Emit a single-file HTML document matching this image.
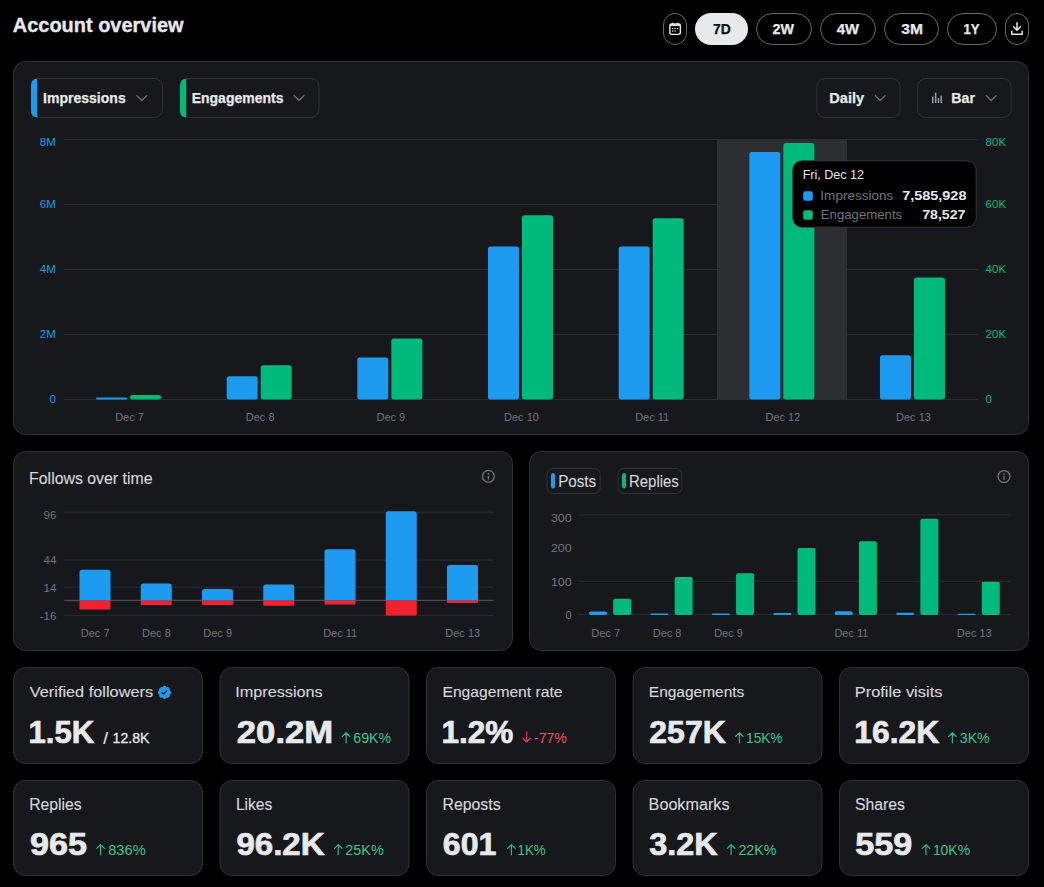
<!DOCTYPE html>
<html><head><meta charset="utf-8"><title>Account overview</title>
<style>
html,body{margin:0;padding:0;background:#000;width:1044px;height:887px;overflow:hidden;}
svg{display:block;font-family:"Liberation Sans", sans-serif;}
</style></head>
<body>
<svg width="1044" height="887" viewBox="0 0 1044 887">
<rect width="1044" height="887" fill="#000"/>
<text x="12.83" y="31.5" font-size="19.513" font-weight="700" fill="#e7e9ea" stroke="#e7e9ea" stroke-width="0.35" textLength="170.76" lengthAdjust="spacingAndGlyphs">Account overview</text>
<rect x="663.5" y="13.5" width="23" height="31" rx="11.5" fill="#000" stroke="#66696d" stroke-width="1"/>
<rect x="695" y="13" width="53" height="32" rx="16" fill="#e7e9ea"/>
<text x="712.97" y="34.1" font-size="13.917" font-weight="700" fill="#0f1419" stroke="#0f1419" stroke-width="0.25" textLength="17.75" lengthAdjust="spacingAndGlyphs">7D</text>
<rect x="756.5" y="13.5" width="55" height="31" rx="16" fill="#000" stroke="#66696d" stroke-width="1"/>
<text x="772.57" y="34.1" font-size="13.917" font-weight="700" fill="#e7e9ea" stroke="#e7e9ea" stroke-width="0.25" textLength="21.4" lengthAdjust="spacingAndGlyphs">2W</text>
<rect x="820.5" y="13.5" width="55" height="31" rx="16" fill="#000" stroke="#66696d" stroke-width="1"/>
<text x="836.81" y="34.1" font-size="13.917" font-weight="700" fill="#e7e9ea" stroke="#e7e9ea" stroke-width="0.25" textLength="22.26" lengthAdjust="spacingAndGlyphs">4W</text>
<rect x="884.5" y="13.5" width="54" height="31" rx="16" fill="#000" stroke="#66696d" stroke-width="1"/>
<text x="901.26" y="34.1" font-size="13.917" font-weight="700" fill="#e7e9ea" stroke="#e7e9ea" stroke-width="0.25" textLength="21.67" lengthAdjust="spacingAndGlyphs">3M</text>
<rect x="947.5" y="13.5" width="49" height="31" rx="16" fill="#000" stroke="#66696d" stroke-width="1"/>
<text x="963.52" y="34.1" font-size="13.917" font-weight="700" fill="#e7e9ea" stroke="#e7e9ea" stroke-width="0.25" textLength="16.1" lengthAdjust="spacingAndGlyphs">1Y</text>
<rect x="1005.5" y="13.5" width="23" height="31" rx="11.5" fill="#000" stroke="#66696d" stroke-width="1"/>
<g fill="none" stroke="#e7e9ea" stroke-width="1.4"><rect x="669.85" y="24.0" width="10.5" height="10.4" rx="1.8"/><path d="M672.6 22.8v2.4M677.6 22.8v2.4"/></g>
<g fill="#e7e9ea"><rect x="670" y="24.4" width="10.2" height="1.6"/><circle cx="672.6" cy="28.5" r="0.8"/><circle cx="675.1" cy="28.5" r="0.8"/><circle cx="677.6" cy="28.5" r="0.8"/><circle cx="672.6" cy="31" r="0.8"/><circle cx="675.1" cy="31" r="0.8"/></g>
<g fill="none" stroke="#e7e9ea" stroke-width="1.5" stroke-linecap="round" stroke-linejoin="round"><path d="M1017 22.8v7.2M1013.6 26.8l3.4 3.4 3.4-3.4M1011.8 31.2v3h10.4v-3"/></g>
<rect x="13.5" y="61.5" width="1015" height="373" rx="12" fill="#16181c" stroke="#2f3336" stroke-width="1"/>
<rect x="31.5" y="78.5" width="131" height="39" rx="8" fill="#16181c" stroke="#2f3336" stroke-width="1"/>
<path d="M37.2 78.6 V117.4 H38 Q31 117.4 31 110.4 V85.6 Q31 78.6 38 78.6 Z" fill="#1d9bf0"/>
<text x="43.0" y="103" font-size="14.499" font-weight="700" fill="#e7e9ea" stroke="#e7e9ea" stroke-width="0.25" textLength="82.7" lengthAdjust="spacingAndGlyphs">Impressions</text>
<path d="M136.9 95.6 l4.95 4.95 4.95 -4.95" fill="none" stroke="#71767b" stroke-width="1.3" stroke-linecap="round" stroke-linejoin="round"/>
<rect x="180.5" y="78.5" width="138.5" height="39" rx="8" fill="#16181c" stroke="#2f3336" stroke-width="1"/>
<path d="M186.2 78.6 V117.4 H187 Q180 117.4 180 110.4 V85.6 Q180 78.6 187 78.6 Z" fill="#00ba7c"/>
<text x="191.7" y="102.8" font-size="14.208" font-weight="700" fill="#e7e9ea" stroke="#e7e9ea" stroke-width="0.25" textLength="91.72" lengthAdjust="spacingAndGlyphs">Engagements</text>
<path d="M294.1 95.6 l4.95 4.95 4.95 -4.95" fill="none" stroke="#71767b" stroke-width="1.3" stroke-linecap="round" stroke-linejoin="round"/>
<rect x="816.9" y="78.5" width="83.10000000000002" height="39" rx="8" fill="#16181c" stroke="#2f3336" stroke-width="1"/>
<text x="829.29" y="102.7" font-size="13.917" font-weight="700" fill="#e7e9ea" stroke="#e7e9ea" stroke-width="0.25" textLength="34.88" lengthAdjust="spacingAndGlyphs">Daily</text>
<path d="M875.3 95.6 l4.95 4.95 4.95 -4.95" fill="none" stroke="#71767b" stroke-width="1.3" stroke-linecap="round" stroke-linejoin="round"/>
<rect x="917.7" y="78.5" width="93.39999999999998" height="39" rx="8" fill="#16181c" stroke="#2f3336" stroke-width="1"/>
<text x="951.32" y="103" font-size="14.208" font-weight="700" fill="#e7e9ea" stroke="#e7e9ea" stroke-width="0.25" textLength="23.67" lengthAdjust="spacingAndGlyphs">Bar</text>
<path d="M986.3 95.6 l4.95 4.95 4.95 -4.95" fill="none" stroke="#71767b" stroke-width="1.3" stroke-linecap="round" stroke-linejoin="round"/>
<rect x="932" y="96.6" width="1.5" height="6.400000000000006" fill="#9a9ea2"/>
<rect x="934.9" y="92.7" width="1.5" height="10.299999999999997" fill="#9a9ea2"/>
<rect x="937.7" y="98.0" width="1.5" height="5.0" fill="#9a9ea2"/>
<rect x="940.5" y="95.6" width="1.5" height="7.400000000000006" fill="#9a9ea2"/>
<rect x="63.5" y="139.0" width="914" height="1" fill="#2a2d31"/>
<rect x="63.5" y="204.0" width="914" height="1" fill="#2a2d31"/>
<rect x="63.5" y="269.0" width="914" height="1" fill="#2a2d31"/>
<rect x="63.5" y="334.0" width="914" height="1" fill="#2a2d31"/>
<rect x="63.5" y="399.0" width="914" height="1" fill="#2a2d31"/>
<rect x="717" y="139.5" width="130" height="259.5" fill="#2c2e32"/>
<rect x="96.0" y="397.4" width="31" height="2.2" rx="1.1000000000000227" fill="#1d9bf0"/>
<rect x="130.0" y="395.1" width="31" height="4.5" rx="2.25" fill="#00ba7c"/>
<rect x="226.67" y="376.2" width="31" height="23.4" rx="2.5" fill="#1d9bf0"/>
<rect x="260.67" y="365.2" width="31" height="34.4" rx="2.5" fill="#00ba7c"/>
<rect x="357.33" y="357.6" width="31" height="42.0" rx="2.5" fill="#1d9bf0"/>
<rect x="391.33" y="338.4" width="31" height="61.2" rx="2.5" fill="#00ba7c"/>
<rect x="488.0" y="246.5" width="31" height="153.1" rx="2.5" fill="#1d9bf0"/>
<rect x="522.0" y="215.3" width="31" height="184.3" rx="2.5" fill="#00ba7c"/>
<rect x="618.67" y="246.5" width="31" height="153.1" rx="2.5" fill="#1d9bf0"/>
<rect x="652.67" y="218.2" width="31" height="181.4" rx="2.5" fill="#00ba7c"/>
<rect x="749.34" y="151.9" width="31" height="247.7" rx="2.5" fill="#1d9bf0"/>
<rect x="783.34" y="143.0" width="31" height="256.6" rx="2.5" fill="#00ba7c"/>
<rect x="880.0" y="355.3" width="31" height="44.3" rx="2.5" fill="#1d9bf0"/>
<rect x="914.0" y="277.4" width="31" height="122.2" rx="2.5" fill="#00ba7c"/>
<text x="55.8" y="146" font-size="11.5" fill="#1d9bf0" text-anchor="end">8M</text>
<text x="55.8" y="208.2" font-size="11.5" fill="#1d9bf0" text-anchor="end">6M</text>
<text x="55.8" y="273.2" font-size="11.5" fill="#1d9bf0" text-anchor="end">4M</text>
<text x="55.8" y="338.2" font-size="11.5" fill="#1d9bf0" text-anchor="end">2M</text>
<text x="55.8" y="403.2" font-size="11.5" fill="#1d9bf0" text-anchor="end">0</text>
<text x="985.6" y="146" font-size="11.5" fill="#00ba7c">80K</text>
<text x="985.6" y="208.2" font-size="11.5" fill="#00ba7c">60K</text>
<text x="985.6" y="273.2" font-size="11.5" fill="#00ba7c">40K</text>
<text x="985.6" y="338.2" font-size="11.5" fill="#00ba7c">20K</text>
<text x="985.6" y="403.2" font-size="11.5" fill="#00ba7c">0</text>
<text x="129.5" y="421" font-size="11" fill="#71767b" text-anchor="middle">Dec 7</text>
<text x="260.17" y="421" font-size="11" fill="#71767b" text-anchor="middle">Dec 8</text>
<text x="390.83" y="421" font-size="11" fill="#71767b" text-anchor="middle">Dec 9</text>
<text x="521.5" y="421" font-size="11" fill="#71767b" text-anchor="middle">Dec 10</text>
<text x="652.17" y="421" font-size="11" fill="#71767b" text-anchor="middle">Dec 11</text>
<text x="782.84" y="421" font-size="11" fill="#71767b" text-anchor="middle">Dec 12</text>
<text x="913.5" y="421" font-size="11" fill="#71767b" text-anchor="middle">Dec 13</text>
<rect x="792.8" y="160.8" width="183.4" height="66.4" rx="9" fill="#000" stroke="#35383c" stroke-width="1"/>
<text x="802.65" y="179.2" font-size="13.227" fill="#e7e9ea" textLength="61.44" lengthAdjust="spacingAndGlyphs">Fri, Dec 12</text>
<rect x="803.2" y="191.2" width="9.6" height="9.5" rx="2" fill="#1d9bf0"/>
<rect x="803.2" y="210.3" width="9.6" height="9.5" rx="2" fill="#00ba7c"/>
<text x="820.37" y="199.9" font-size="13.227" fill="#71767b" textLength="72.94" lengthAdjust="spacingAndGlyphs">Impressions</text>
<text x="820.84" y="219" font-size="13.518" fill="#71767b" textLength="81.33" lengthAdjust="spacingAndGlyphs">Engagements</text>
<text x="902.17" y="199.9" font-size="13.227" font-weight="700" fill="#e7e9ea" textLength="64.29" lengthAdjust="spacingAndGlyphs">7,585,928</text>
<text x="922.21" y="219" font-size="13.518" font-weight="700" fill="#e7e9ea" textLength="43.21" lengthAdjust="spacingAndGlyphs">78,527</text>
<rect x="13.5" y="451.5" width="499" height="199" rx="12" fill="#16181c" stroke="#2f3336" stroke-width="1"/>
<text x="29.11" y="484" font-size="15.88" fill="#d5d7d9" stroke="#d5d7d9" stroke-width="0.15" textLength="123.39" lengthAdjust="spacingAndGlyphs">Follows over time</text>
<g fill="none" stroke="#71767b" stroke-width="1.3"><circle cx="488.4" cy="476.3" r="5.9"/></g>
<g fill="#71767b"><circle cx="488.4" cy="473.90000000000003" r="0.85"/><rect x="487.75" y="475.7" width="1.3" height="3.9" rx="0.6"/></g>
<rect x="64.3" y="511.70000000000005" width="429" height="1" fill="#2a2d31"/>
<rect x="64.3" y="559.6" width="429" height="1" fill="#2a2d31"/>
<rect x="64.3" y="586.7" width="429" height="1" fill="#2a2d31"/>
<rect x="64.3" y="614.9" width="429" height="1" fill="#2a2d31"/>
<rect x="64.3" y="599.8" width="429" height="1.2" fill="#4a4e52"/>
<path d="M79.5 600.4 V572.2 Q79.5 569.7 82.0 569.7 H108.0 Q110.5 569.7 110.5 572.2 V600.4 Z" fill="#1d9bf0"/>
<path d="M79.5 600.4 V608.3 Q79.5 609.5 80.7 609.5 H109.3 Q110.5 609.5 110.5 608.3 V600.4 Z" fill="#f4212e"/>
<path d="M140.75 600.4 V586.1 Q140.75 583.6 143.25 583.6 H169.25 Q171.75 583.6 171.75 586.1 V600.4 Z" fill="#1d9bf0"/>
<path d="M140.75 600.4 V603.8 Q140.75 605.0 141.95 605.0 H170.55 Q171.75 605.0 171.75 603.8 V600.4 Z" fill="#f4212e"/>
<path d="M202.0 600.4 V591.6 Q202.0 589.1 204.5 589.1 H230.5 Q233.0 589.1 233.0 591.6 V600.4 Z" fill="#1d9bf0"/>
<path d="M202.0 600.4 V603.8 Q202.0 605.0 203.2 605.0 H231.8 Q233.0 605.0 233.0 603.8 V600.4 Z" fill="#f4212e"/>
<path d="M263.25 600.4 V587.1 Q263.25 584.6 265.75 584.6 H291.75 Q294.25 584.6 294.25 587.1 V600.4 Z" fill="#1d9bf0"/>
<path d="M263.25 600.4 V604.5999999999999 Q263.25 605.8 264.45 605.8 H293.05 Q294.25 605.8 294.25 604.5999999999999 V600.4 Z" fill="#f4212e"/>
<path d="M324.5 600.4 V551.7 Q324.5 549.2 327.0 549.2 H353.0 Q355.5 549.2 355.5 551.7 V600.4 Z" fill="#1d9bf0"/>
<path d="M324.5 600.4 V603.4 Q324.5 604.6 325.7 604.6 H354.3 Q355.5 604.6 355.5 603.4 V600.4 Z" fill="#f4212e"/>
<path d="M385.75 600.4 V513.8 Q385.75 511.3 388.25 511.3 H414.25 Q416.75 511.3 416.75 513.8 V600.4 Z" fill="#1d9bf0"/>
<path d="M385.75 600.4 V614.4 Q385.75 615.6 386.95 615.6 H415.55 Q416.75 615.6 416.75 614.4 V600.4 Z" fill="#f4212e"/>
<path d="M447.0 600.4 V567.5 Q447.0 565.0 449.5 565.0 H475.5 Q478.0 565.0 478.0 567.5 V600.4 Z" fill="#1d9bf0"/>
<path d="M447.0 600.4 V601.6999999999999 Q447.0 602.9 448.2 602.9 H476.8 Q478.0 602.9 478.0 601.6999999999999 V600.4 Z" fill="#f4212e"/>
<text x="56.4" y="519.4" font-size="11.5" fill="#71767b" text-anchor="end">96</text>
<text x="56.4" y="564.4" font-size="11.5" fill="#71767b" text-anchor="end">44</text>
<text x="56.4" y="592" font-size="11.5" fill="#71767b" text-anchor="end">14</text>
<text x="56.4" y="620" font-size="11.5" fill="#71767b" text-anchor="end">-16</text>
<text x="95.2" y="637" font-size="11" fill="#71767b" text-anchor="middle">Dec 7</text>
<text x="156.45" y="637" font-size="11" fill="#71767b" text-anchor="middle">Dec 8</text>
<text x="217.7" y="637" font-size="11" fill="#71767b" text-anchor="middle">Dec 9</text>
<text x="340.2" y="637" font-size="11" fill="#71767b" text-anchor="middle">Dec 11</text>
<text x="462.7" y="637" font-size="11" fill="#71767b" text-anchor="middle">Dec 13</text>
<rect x="529.5" y="451.5" width="499" height="199" rx="12" fill="#16181c" stroke="#2f3336" stroke-width="1"/>
<rect x="546.9" y="468.5" width="53.30000000000007" height="25" rx="6" fill="#16181c" stroke="#2f3336" stroke-width="1"/>
<rect x="551.0" y="473" width="4" height="15.6" rx="2" fill="#1d9bf0"/>
<text x="558.13" y="486.6" font-size="16.207" fill="#d5d7d9" stroke="#d5d7d9" stroke-width="0.1" textLength="38.09" lengthAdjust="spacingAndGlyphs">Posts</text>
<rect x="617.9" y="468.5" width="64.0" height="25" rx="6" fill="#16181c" stroke="#2f3336" stroke-width="1"/>
<rect x="622.0" y="473" width="4" height="15.6" rx="2" fill="#00ba7c"/>
<text x="628.99" y="486.6" font-size="16.207" fill="#d5d7d9" stroke="#d5d7d9" stroke-width="0.1" textLength="49.87" lengthAdjust="spacingAndGlyphs">Replies</text>
<g fill="none" stroke="#71767b" stroke-width="1.3"><circle cx="1004" cy="476.5" r="5.9"/></g>
<g fill="#71767b"><circle cx="1004" cy="474.1" r="0.85"/><rect x="1003.35" y="475.9" width="1.3" height="3.9" rx="0.6"/></g>
<rect x="579" y="514.3" width="431.7" height="1" fill="#2a2d31"/>
<rect x="579" y="580.8" width="431.7" height="1" fill="#2a2d31"/>
<rect x="579" y="613.9" width="431.7" height="1" fill="#2a2d31"/>
<rect x="589.0" y="611.5" width="18" height="3.5" rx="1.75" fill="#1d9bf0"/>
<rect x="613.2" y="598.7" width="18" height="16.3" rx="2" fill="#00ba7c"/>
<rect x="650.43" y="613.6" width="18" height="1.4" rx="0.6999999999999886" fill="#1d9bf0"/>
<rect x="674.63" y="577.0" width="18" height="38.0" rx="2" fill="#00ba7c"/>
<rect x="711.86" y="613.6" width="18" height="1.4" rx="0.6999999999999886" fill="#1d9bf0"/>
<rect x="736.06" y="573.3" width="18" height="41.7" rx="2" fill="#00ba7c"/>
<rect x="773.29" y="613.0" width="18" height="2.0" rx="1.0" fill="#1d9bf0"/>
<rect x="797.49" y="548.0" width="18" height="67.0" rx="2" fill="#00ba7c"/>
<rect x="834.72" y="611.3" width="18" height="3.7" rx="1.8500000000000227" fill="#1d9bf0"/>
<rect x="858.92" y="541.3" width="18" height="73.7" rx="2" fill="#00ba7c"/>
<rect x="896.15" y="612.7" width="18" height="2.3" rx="1.1499999999999773" fill="#1d9bf0"/>
<rect x="920.35" y="518.8" width="18" height="96.2" rx="2" fill="#00ba7c"/>
<rect x="957.58" y="613.7" width="18" height="1.3" rx="0.6499999999999773" fill="#1d9bf0"/>
<rect x="981.78" y="581.8" width="18" height="33.2" rx="2" fill="#00ba7c"/>
<text x="571.7" y="521.8" font-size="11" fill="#71767b" text-anchor="end" textLength="20.8" lengthAdjust="spacingAndGlyphs">300</text>
<text x="571.7" y="552.1" font-size="11" fill="#71767b" text-anchor="end" textLength="20.8" lengthAdjust="spacingAndGlyphs">200</text>
<text x="571.7" y="585.9" font-size="11" fill="#71767b" text-anchor="end" textLength="20.8" lengthAdjust="spacingAndGlyphs">100</text>
<text x="571.7" y="618.6" font-size="11" fill="#71767b" text-anchor="end">0</text>
<text x="605.7" y="636.7" font-size="11" fill="#71767b" text-anchor="middle">Dec 7</text>
<text x="667.13" y="636.7" font-size="11" fill="#71767b" text-anchor="middle">Dec 8</text>
<text x="728.56" y="636.7" font-size="11" fill="#71767b" text-anchor="middle">Dec 9</text>
<text x="851.42" y="636.7" font-size="11" fill="#71767b" text-anchor="middle">Dec 11</text>
<text x="974.28" y="636.7" font-size="11" fill="#71767b" text-anchor="middle">Dec 13</text>
<rect x="13.5" y="667.5" width="189.0" height="96" rx="12" fill="#16181c" stroke="#2f3336" stroke-width="1"/>
<text x="29.8" y="696.6" font-size="15.298" fill="#d5d7d9" stroke="#d5d7d9" stroke-width="0.15" textLength="123.28" lengthAdjust="spacingAndGlyphs">Verified followers</text>
<text x="28.5" y="742.6" font-size="30.596" font-weight="700" fill="#e7e9ea" stroke="#e7e9ea" stroke-width="0.7" textLength="65.66" lengthAdjust="spacingAndGlyphs">1.5K</text>
<rect x="220.0" y="667.5" width="189.0" height="96" rx="12" fill="#16181c" stroke="#2f3336" stroke-width="1"/>
<text x="235.18" y="696.6" font-size="15.298" fill="#d5d7d9" stroke="#d5d7d9" stroke-width="0.15" textLength="87.52" lengthAdjust="spacingAndGlyphs">Impressions</text>
<text x="236.79" y="742.6" font-size="30.596" font-weight="700" fill="#e7e9ea" stroke="#e7e9ea" stroke-width="0.7" textLength="96.47" lengthAdjust="spacingAndGlyphs">20.2M</text>
<path d="M346.09999999999997 742.8000000000001 V732.6999999999999 M342.3 736.5 L346.09999999999997 732.6999999999999 L349.9 736.5" fill="none" stroke="#2fbd85" stroke-width="1.15" stroke-linecap="round" stroke-linejoin="round"/>
<text x="353.28" y="742.6" font-size="13.954" fill="#3fc48d" textLength="37.84" lengthAdjust="spacingAndGlyphs">69K%</text>
<rect x="426.5" y="667.5" width="189.0" height="96" rx="12" fill="#16181c" stroke="#2f3336" stroke-width="1"/>
<text x="442.49" y="696.6" font-size="15.298" fill="#d5d7d9" stroke="#d5d7d9" stroke-width="0.15" textLength="119.97" lengthAdjust="spacingAndGlyphs">Engagement rate</text>
<text x="441.54" y="742.6" font-size="30.596" font-weight="700" fill="#e7e9ea" stroke="#e7e9ea" stroke-width="0.7" textLength="71.88" lengthAdjust="spacingAndGlyphs">1.2%</text>
<path d="M526.6999999999999 731.9 V742.0000000000001 M522.9 738.2 L526.6999999999999 742.0000000000001 L530.5 738.2" fill="none" stroke="#f0385a" stroke-width="1.15" stroke-linecap="round" stroke-linejoin="round"/>
<text x="534.04" y="742.6" font-size="13.954" fill="#f0506a" textLength="32.8" lengthAdjust="spacingAndGlyphs">-77%</text>
<rect x="633.0" y="667.5" width="189.0" height="96" rx="12" fill="#16181c" stroke="#2f3336" stroke-width="1"/>
<text x="648.88" y="696.6" font-size="15.298" fill="#d5d7d9" stroke="#d5d7d9" stroke-width="0.15" textLength="95.38" lengthAdjust="spacingAndGlyphs">Engagements</text>
<text x="649.34" y="742.6" font-size="30.596" font-weight="700" fill="#e7e9ea" stroke="#e7e9ea" stroke-width="0.7" textLength="76.46" lengthAdjust="spacingAndGlyphs">257K</text>
<path d="M739.4 742.8000000000001 V732.6999999999999 M735.6 736.5 L739.4 732.6999999999999 L743.2 736.5" fill="none" stroke="#2fbd85" stroke-width="1.15" stroke-linecap="round" stroke-linejoin="round"/>
<text x="746.04" y="742.6" font-size="13.954" fill="#3fc48d" textLength="36.49" lengthAdjust="spacingAndGlyphs">15K%</text>
<rect x="839.5" y="667.5" width="189.0" height="96" rx="12" fill="#16181c" stroke="#2f3336" stroke-width="1"/>
<text x="854.71" y="696.6" font-size="15.298" fill="#d5d7d9" stroke="#d5d7d9" stroke-width="0.15" textLength="87.73" lengthAdjust="spacingAndGlyphs">Profile visits</text>
<text x="854.39" y="742.6" font-size="30.596" font-weight="700" fill="#e7e9ea" stroke="#e7e9ea" stroke-width="0.7" textLength="84.89" lengthAdjust="spacingAndGlyphs">16.2K</text>
<path d="M952.4 742.8000000000001 V732.6999999999999 M948.6 736.5 L952.4 732.6999999999999 L956.2 736.5" fill="none" stroke="#2fbd85" stroke-width="1.15" stroke-linecap="round" stroke-linejoin="round"/>
<text x="959.82" y="742.6" font-size="13.954" fill="#3fc48d" textLength="29.9" lengthAdjust="spacingAndGlyphs">3K%</text>
<rect x="13.5" y="780.5" width="189.0" height="95" rx="12" fill="#16181c" stroke="#2f3336" stroke-width="1"/>
<text x="29.27" y="810" font-size="15.88" fill="#d5d7d9" stroke="#d5d7d9" stroke-width="0.15" textLength="52.39" lengthAdjust="spacingAndGlyphs">Replies</text>
<text x="29.92" y="854.6" font-size="30.596" font-weight="700" fill="#e7e9ea" stroke="#e7e9ea" stroke-width="0.7" textLength="56.98" lengthAdjust="spacingAndGlyphs">965</text>
<path d="M100.60000000000001 854.7 V844.5999999999999 M96.8 848.4 L100.60000000000001 844.5999999999999 L104.4 848.4" fill="none" stroke="#2fbd85" stroke-width="1.15" stroke-linecap="round" stroke-linejoin="round"/>
<text x="108.2" y="854.8" font-size="14.535" fill="#3fc48d" textLength="37.48" lengthAdjust="spacingAndGlyphs">836%</text>
<rect x="220.0" y="780.5" width="189.0" height="95" rx="12" fill="#16181c" stroke="#2f3336" stroke-width="1"/>
<text x="235.96" y="810" font-size="15.88" fill="#d5d7d9" stroke="#d5d7d9" stroke-width="0.15" textLength="36.37" lengthAdjust="spacingAndGlyphs">Likes</text>
<text x="236.4" y="854.6" font-size="30.596" font-weight="700" fill="#e7e9ea" stroke="#e7e9ea" stroke-width="0.7" textLength="88.26" lengthAdjust="spacingAndGlyphs">96.2K</text>
<path d="M338.2 854.7 V844.5999999999999 M334.40000000000003 848.4 L338.2 844.5999999999999 L342.0 848.4" fill="none" stroke="#2fbd85" stroke-width="1.15" stroke-linecap="round" stroke-linejoin="round"/>
<text x="345.37" y="854.8" font-size="14.535" fill="#3fc48d" textLength="38.32" lengthAdjust="spacingAndGlyphs">25K%</text>
<rect x="426.5" y="780.5" width="189.0" height="95" rx="12" fill="#16181c" stroke="#2f3336" stroke-width="1"/>
<text x="442.49" y="810" font-size="15.88" fill="#d5d7d9" stroke="#d5d7d9" stroke-width="0.15" textLength="58.14" lengthAdjust="spacingAndGlyphs">Reposts</text>
<text x="442.82" y="854.6" font-size="30.596" font-weight="700" fill="#e7e9ea" stroke="#e7e9ea" stroke-width="0.7" textLength="53.52" lengthAdjust="spacingAndGlyphs">601</text>
<path d="M511.4 854.7 V844.5999999999999 M507.6 848.4 L511.4 844.5999999999999 L515.2 848.4" fill="none" stroke="#2fbd85" stroke-width="1.15" stroke-linecap="round" stroke-linejoin="round"/>
<text x="517.62" y="854.8" font-size="14.535" fill="#3fc48d" textLength="28.06" lengthAdjust="spacingAndGlyphs">1K%</text>
<rect x="633.0" y="780.5" width="189.0" height="95" rx="12" fill="#16181c" stroke="#2f3336" stroke-width="1"/>
<text x="648.61" y="810" font-size="15.88" fill="#d5d7d9" stroke="#d5d7d9" stroke-width="0.15" textLength="80.86" lengthAdjust="spacingAndGlyphs">Bookmarks</text>
<text x="649.26" y="854.6" font-size="30.596" font-weight="700" fill="#e7e9ea" stroke="#e7e9ea" stroke-width="0.7" textLength="68.42" lengthAdjust="spacingAndGlyphs">3.2K</text>
<path d="M731.1 854.7 V844.5999999999999 M727.3000000000001 848.4 L731.1 844.5999999999999 L734.9000000000001 848.4" fill="none" stroke="#2fbd85" stroke-width="1.15" stroke-linecap="round" stroke-linejoin="round"/>
<text x="738.39" y="854.8" font-size="14.535" fill="#3fc48d" textLength="37.98" lengthAdjust="spacingAndGlyphs">22K%</text>
<rect x="839.5" y="780.5" width="189.0" height="95" rx="12" fill="#16181c" stroke="#2f3336" stroke-width="1"/>
<text x="854.94" y="810" font-size="15.88" fill="#d5d7d9" stroke="#d5d7d9" stroke-width="0.15" textLength="49.86" lengthAdjust="spacingAndGlyphs">Shares</text>
<text x="855.38" y="854.6" font-size="30.596" font-weight="700" fill="#e7e9ea" stroke="#e7e9ea" stroke-width="0.7" textLength="56.99" lengthAdjust="spacingAndGlyphs">559</text>
<path d="M926.0 854.7 V844.5999999999999 M922.2 848.4 L926.0 844.5999999999999 L929.8000000000001 848.4" fill="none" stroke="#2fbd85" stroke-width="1.15" stroke-linecap="round" stroke-linejoin="round"/>
<text x="932.88" y="854.8" font-size="14.535" fill="#3fc48d" textLength="37.18" lengthAdjust="spacingAndGlyphs">10K%</text>
<text x="103.2" y="743.6" font-size="17" fill="#e7e9ea" stroke="#e7e9ea" stroke-width="0.2">/</text>
<text x="112.62" y="742.8" font-size="14.026" fill="#e7e9ea" stroke="#e7e9ea" stroke-width="0.3" textLength="36.86" lengthAdjust="spacingAndGlyphs">12.8K</text>
<g transform="translate(164.5 692.4) scale(0.70) translate(-11 -11)"><path fill-rule="evenodd" fill="#1d9bf0" d="M20.396 11c-.018-.646-.215-1.275-.57-1.816-.354-.54-.852-.972-1.438-1.246.223-.607.27-1.264.14-1.897-.131-.634-.437-1.218-.882-1.687-.47-.445-1.053-.75-1.687-.882-.633-.13-1.29-.083-1.897.14-.273-.587-.704-1.086-1.245-1.44S11.647 1.62 11 1.604c-.646.017-1.273.213-1.813.568s-.969.854-1.24 1.44c-.608-.223-1.267-.272-1.902-.14-.635.13-1.22.436-1.69.882-.445.47-.749 1.055-.878 1.688-.13.633-.08 1.29.144 1.896-.587.274-1.087.705-1.443 1.245-.356.54-.555 1.17-.574 1.817.02.647.218 1.276.574 1.817.356.54.856.972 1.443 1.245-.224.606-.274 1.263-.144 1.896.13.634.433 1.218.877 1.688.47.443 1.054.747 1.687.878.633.132 1.29.084 1.897-.136.274.586.705 1.084 1.246 1.439.54.354 1.170.551 1.816.569.647-.016 1.276-.213 1.817-.567s.972-.854 1.245-1.44c.604.239 1.266.296 1.903.164.636-.132 1.22-.447 1.68-.907.46-.46.776-1.044.908-1.681s.075-1.299-.165-1.903c.586-.274 1.084-.705 1.439-1.246.354-.54.551-1.17.569-1.816zM9.662 14.85l-3.429-3.428 1.293-1.302 2.072 2.072 4.4-4.794 1.347 1.246z"/></g>
</svg>
</body></html>
